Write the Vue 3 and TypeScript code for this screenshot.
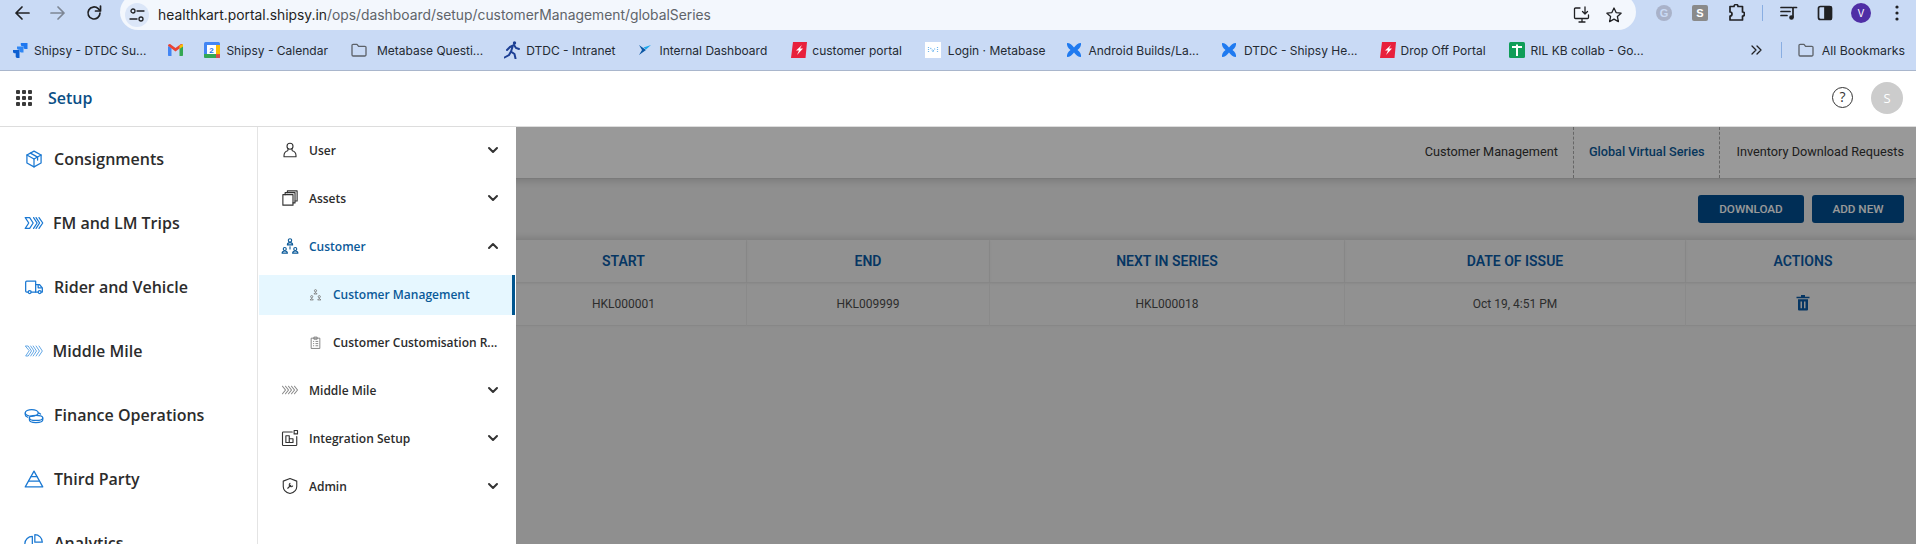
<script setup lang="ts">
interface NavItem { label: string; paths: string[]; faint?: boolean }
interface SubItem { label: string; paths: string[]; kind: 'group' | 'sub'; active?: boolean; open?: boolean; blue?: boolean; muted?: boolean }

const primary: NavItem[] = [
  { label: 'Consignments', paths: ['M12 2.5l8.5 4.7v9.6L12 21.5l-8.5-4.7V7.2z', 'M3.5 7.2L12 12l8.5-4.8', 'M12 12v9.5', 'M7.7 4.9l8.6 4.8v3.6'] },
  { label: 'FM and LM Trips', paths: ['M1.5 5.5h5.3l4.2 6.5-4.2 6.5H1.5L5.7 12z', 'M11.5 5.5L15.7 12l-4.2 6.5', 'M14.5 5.5L18.7 12l-4.2 6.5', 'M18 5.5l4.5 6.5-4.5 6.5'] },
  { label: 'Rider and Vehicle', paths: ['M5 18H3.2A1.2 1.2 0 0 1 2 16.800V6.200A1.200 1.200 0 0 1 3.200 5H14v13H8.500', 'M14 9h4.500l3.500 4v5h-1.500', 'M14 18h3', 'M5 18a1.800 1.800 0 1 0 3.600 0a1.800 1.800 0 1 0-3.600 0', 'M17 18a1.800 1.800 0 1 0 3.600 0a1.800 1.800 0 1 0-3.600 0', 'M17 10v3h4'] },
  { label: 'Middle Mile', faint: true, paths: ['M2 6h3l4 6-4 6H2l4-6z', 'M8 6l4 6-4 6', 'M11 6l4 6-4 6', 'M14.500 6l4 6-4 6', 'M18 6l4 6-4 6'] },
  { label: 'Finance Operations', paths: ['M1.500 9.500C1.500 7.300 5 5.500 9.300 5.500s7.800 1.800 7.800 4-3.500 4-7.800 4-7.800-1.800-7.800-4z', 'M1.500 9.500v2.300c0 1.200 1.200 2.200 3 2.900', 'M6.500 15.500c0-1.800 3.500-3 7.800-3s8.200 1.200 8.200 3-3.900 3-8.200 3-7.800-1.200-7.800-3z', 'M6.500 15.500v2.500c0 1.800 3.500 3 7.800 3s8.200-1.200 8.200-3v-2.500', 'M17 9.500c1 .3 2 .7 2.800 1.300'] },
  { label: 'Third Party', paths: ['M12 2.500L22.500 21.500h-21z', 'M8.500 9h7', 'M5.500 14.500h13'] },
  { label: 'Analytics', paths: ['M10 4a9 9 0 1 0 9 10h-9z', 'M13 2a9 9 0 0 1 9 9h-9z'] },
]

const secondary: SubItem[] = [
  { label: 'User', kind: 'group', paths: ['M8 7a4 4 0 1 0 8 0a4 4 0 1 0-8 0', 'M9.500 10.500l-.5 2.500C6 13.800 4 16.500 4 19.500V21h16v-1.500c0-3-2-5.700-5-6.500l-.5-2.500'] },
  { label: 'Assets', kind: 'group', paths: ['M2.500 7.500h13.500v14H2.500z', 'M5.500 7.500V4.800h13.200v13.700H16', 'M8.500 4.800V2.500h13v13.500h-2.800'] },
  { label: 'Customer', kind: 'group', open: true, blue: true, paths: ['M9.800 4.500a2.200 2.200 0 1 0 4.400 0a2.200 2.200 0 1 0-4.400 0', 'M8.500 10.500c0-2 1.500-3 3.500-3s3.500 1 3.500 3z', 'M3 16a2 2 0 1 0 4 0a2 2 0 1 0-4 0', 'M1.500 21.500c0-2 1.500-2.800 3.500-2.800s3.500.8 3.500 2.800z', 'M17 16a2 2 0 1 0 4 0a2 2 0 1 0-4 0', 'M15.500 21.500c0-2 1.500-2.800 3.500-2.800s3.500.8 3.500 2.800z', 'M12 13v3'] },
  { label: 'Customer Management', kind: 'sub', active: true, paths: ['M10 5a2 2 0 1 0 4 0a2 2 0 1 0-4 0', 'M9 11l3-3 3 3z', 'M3 16a2 2 0 1 0 4 0a2 2 0 1 0-4 0', 'M2 22l3-3 3 3z', 'M17 16a2 2 0 1 0 4 0a2 2 0 1 0-4 0', 'M16 22l3-3 3 3z'] },
  { label: 'Customer Customisation R...', kind: 'sub', paths: ['M4 4h16v19H4z', 'M9 2h6v4H9z', 'M7.500 10h2M12 10h5M7.500 14h2M12 14h5M7.500 18h2M12 18h5'] },
  { label: 'Middle Mile', kind: 'group', muted: true, paths: ['M2 7l4 5-4 5', 'M6 7l4 5-4 5', 'M10 7l4 5-4 5', 'M14 7l4 5-4 5', 'M18 7l4 5-4 5'] },
  { label: 'Integration Setup', kind: 'group', paths: ['M15 4H3a1 1 0 0 0-1 1v16a1 1 0 0 0 1 1h17a1 1 0 0 0 1-1V10', 'M6.500 9h4.500v9H6.500zM11 13h5v5h-5z', 'M17.500 2h4.500v4.500h-4.500z'] },
  { label: 'Admin', kind: 'group', paths: ['M12 2l9 3.500v7c0 4.500-3.500 8-9 9.500-5.500-1.500-9-5-9-9.500v-7z', 'M9 15l4-4', 'M12 8.500a2.500 2.500 0 1 0 3.500 3.500'] },
]

const columns = ['', 'START', 'END', 'NEXT IN SERIES', 'DATE OF ISSUE', 'ACTIONS']
const cells = ['', 'HKL000001', 'HKL009999', 'HKL000018', 'Oct 19, 4:51 PM']
const gridDots = [0, 1, 2].flatMap((r) => [0, 1, 2].map((c) => ({ x: 2 + c * 6, y: 2 + r * 6 })))
</script>

<template>
  <div class="screen">
    <header class="browser">
      <div class="toolbar">
        <div class="nav-buttons">
          <span class="tool"><svg width="18" height="18" viewBox="0 0 18 18" class="ink"><path d="M16 9H3M9 3L3 9l6 6" /></svg></span>
          <span class="tool"><svg width="18" height="18" viewBox="0 0 18 18" class="ink dim"><path d="M2 9h13M9 3l6 6-6 6" /></svg></span>
          <span class="tool"><svg width="18" height="18" viewBox="0 0 18 18" class="ink"><path d="M15 9a6 6 0 1 1-1.800-4.300L15 6.500" /><path d="M15.500 2v5h-5" /></svg></span>
        </div>
        <div class="omnibox">
          <span class="chip">
            <svg width="16" height="16" viewBox="0 0 16 16" class="ink thin"><circle cx="4" cy="4" r="2" /><path d="M8 4h7M1 12h7" /><circle cx="12" cy="12" r="2" /></svg>
          </span>
          <span class="url">healthkart.portal.shipsy.in<span class="url-path">/ops/dashboard/setup/customerManagement/globalSeries</span></span>
          <span class="omni-tool"><svg width="18" height="18" viewBox="0 0 18 18" class="ink thin"><path d="M7 2H2.500A1 1 0 0 0 1.500 3v8.500a1 1 0 0 0 1 1h12a1 1 0 0 0 1-1V9M6 16h6M9 13v3" /><path d="M12 1v7M9.500 5.500L12 8l2.500-2.500" /></svg></span>
          <span class="omni-tool"><svg width="18" height="18" viewBox="0 0 18 18" class="ink thin"><path d="M9 2l2.100 4.600 5 .6-3.700 3.400 1 5L9 13.100l-4.400 2.500 1-5L1.900 7.200l5-.6z" /></svg></span>
        </div>
        <div class="extensions">
          <span class="tool"><span class="ext-g">G</span></span>
          <span class="tool"><span class="ext-s">S</span></span>
          <span class="tool"><svg width="18" height="18" viewBox="0 0 18 18" class="ink"><path d="M3 2.500h4a2 2 0 0 1 4 0h4.500V8a2 2 0 0 1 0 4v4H3v-4a2 2 0 0 0 0-4z" /></svg></span>
          <span class="divider"></span>
          <span class="tool"><svg width="18" height="18" viewBox="0 0 18 18" class="ink"><path d="M1 3.500h11M1 7.500h9M1 11.500h6M13 13V3.500h3.500" /><circle cx="11.500" cy="13.500" r="1.500" fill="#202124" /></svg></span>
          <span class="tool"><svg width="18" height="18" viewBox="0 0 18 18" class="ink"><rect x="2.500" y="2.500" width="13" height="13" rx="2" /><rect x="9" y="3" width="6" height="12" fill="#202124" /></svg></span>
          <span class="tool"><span class="profile">V</span></span>
          <span class="tool"><svg width="4" height="16" viewBox="0 0 4 16"><circle cx="2" cy="2" r="1.600" fill="#202124" /><circle cx="2" cy="8" r="1.600" fill="#202124" /><circle cx="2" cy="14" r="1.600" fill="#202124" /></svg></span>
        </div>
      </div>
      <div class="bookmarks">
        <span class="mark"><svg width="16" height="16" viewBox="0 0 16 16"><path d="M15.500 1H8.800v1.800c0 .8.600 1.400 1.400 1.400h1.300v1.300c0 .8.600 1.400 1.400 1.400h2.600z" fill="#1f78f0" /><path d="M11.500 4.500H5v1.800c0 .8.600 1.400 1.400 1.400h1.300V9c0 .8.600 1.400 1.400 1.400h2.400z" fill="#2f86f4" /><path d="M7.500 8H1v1.800c0 .8.600 1.400 1.400 1.400h1.300v3.300c0 .8.600 1.400 1.400 1.400h2.400z" fill="#0d5fd1" /></svg><span>Shipsy - DTDC Su...</span></span>
        <span class="mark solo"><svg width="15" height="12" viewBox="0 0 15 12"><path d="M0 2v9c0 .6.400 1 1 1h2.500V4z" fill="#4285f4" /><path d="M11.500 4v8H14c.6 0 1-.4 1-1V2z" fill="#34a853" /><path d="M0 1.800C0 .4 1.500-.4 2.700.4L7.500 4l4.800-3.600C13.500-.4 15 .4 15 1.800L7.500 7.500z" fill="#ea4335" /><path d="M11.500 1.500L15 0v2.500l-3.500 2.500z" fill="#fbbc04" /></svg></span>
        <span class="mark"><svg width="16" height="16" viewBox="0 0 16 16"><rect width="16" height="16" rx="1.500" fill="#4285f4" /><rect x="12" y="3" width="4" height="10" fill="#fbbc04" /><path d="M0 12h12v4H1.500A1.500 1.500 0 0 1 0 14.500z" fill="#34a853" /><path d="M12 12h4v4h-4z" fill="#ea4335" opacity=".85" /><rect x="3" y="3" width="9" height="9" fill="#fff" /><text x="7.500" y="10.500" class="cal">2</text></svg><span>Shipsy - Calendar</span></span>
        <span class="mark"><svg width="16" height="14" viewBox="0 0 16 14" class="folder"><path d="M1 2.500A1.200 1.200 0 0 1 2.200 1.300H6l1.600 2h6.200A1.200 1.200 0 0 1 15 4.500v7.300a1.200 1.200 0 0 1-1.200 1.200H2.200A1.200 1.200 0 0 1 1 11.800z" /></svg><span>Metabase Questi...</span></span>
        <span class="mark"><svg width="16" height="18" viewBox="0 0 16 18"><circle cx="10.500" cy="2" r="1.700" fill="#1c3f94" /><path d="M6 6l4-2 2 3 3 1M8.500 6L7 10.500l3.500 2.500 1 4.500M7 10.500L5 14l-4.500 2.500M6 6L3 9" fill="none" stroke="#1c3f94" stroke-width="2" stroke-linecap="round" /></svg><span>DTDC - Intranet</span></span>
        <span class="mark"><svg width="12" height="12" viewBox="0 0 12 12"><path d="M0 1l7 5-7 5 3-5z" fill="#0b57a4" /><path d="M12 1L7 5.500 4.500 3.500z" fill="#1aa7ec" /></svg><span>Internal Dashboard</span></span>
        <span class="mark"><svg width="16" height="16" viewBox="0 0 16 16"><path d="M2 0h14l-1.500 16H0z" fill="#e8203c" /><path d="M11 3L5 8.500h3L6 13l6-6.500H9z" fill="#fff" /></svg><span>customer portal</span></span>
        <span class="mark"><svg width="16" height="16" viewBox="0 0 16 16"><rect width="16" height="16" fill="#fff" /><path d="M3.500 5v6M12.500 5v6M5.500 6l2.500 3 2.500-3M8 9v2" fill="none" stroke="#6fb6ee" stroke-width="1.200" stroke-dasharray="1 1" /></svg><span>Login · Metabase</span></span>
        <span class="mark"><svg width="16" height="16" viewBox="0 0 16 16"><path d="M1 1c3 0 5 2 7 4.500C10 3 12 1 15 1c.5 2.500-1 5-3.500 7 2.500 2 4 4.500 3.500 7-3 0-5-2-7-4.500C6 13 4 15 1 15c-.5-2.500 1-5 3.500-7C2 6 .5 3.500 1 1z" fill="#1f7af0" /></svg><span>Android Builds/La...</span></span>
        <span class="mark"><svg width="16" height="16" viewBox="0 0 16 16"><path d="M1 1c3 0 5 2 7 4.500C10 3 12 1 15 1c.5 2.500-1 5-3.500 7 2.500 2 4 4.500 3.500 7-3 0-5-2-7-4.500C6 13 4 15 1 15c-.5-2.500 1-5 3.500-7C2 6 .5 3.500 1 1z" fill="#1f7af0" /></svg><span>DTDC - Shipsy He...</span></span>
        <span class="mark"><svg width="16" height="16" viewBox="0 0 16 16"><path d="M2 0h14l-1.500 16H0z" fill="#e8203c" /><path d="M11 3L5 8.500h3L6 13l6-6.500H9z" fill="#fff" /></svg><span>Drop Off Portal</span></span>
        <span class="mark"><svg width="16" height="16" viewBox="0 0 16 16"><rect width="16" height="16" rx="1.500" fill="#0f9d58" /><path d="M3 5h10M8 2.500V14" stroke="#fff" stroke-width="2" /></svg><span>RIL KB collab - Go...</span></span>
        <span class="bookmarks-end">
          <svg width="11" height="10" viewBox="0 0 11 10" class="ink thin"><path d="M1 1l4 4-4 4M6 1l4 4-4 4" /></svg>
          <span class="bar-divider"></span>
          <span class="mark all"><svg width="16" height="14" viewBox="0 0 16 14" class="folder"><path d="M1 2.500A1.200 1.200 0 0 1 2.200 1.300H6l1.600 2h6.200A1.200 1.200 0 0 1 15 4.500v7.300a1.200 1.200 0 0 1-1.200 1.200H2.200A1.200 1.200 0 0 1 1 11.800z" /></svg><span>All Bookmarks</span></span>
        </span>
      </div>
    </header>

    <div class="app-bar">
      <svg class="app-grid" width="16" height="16" viewBox="0 0 16 16"><rect v-for="(d, i) in gridDots" :key="i" :x="d.x - 2" :y="d.y - 2" width="4" height="4" rx="1" fill="#3a3a3a" /></svg>
      <span class="app-title">Setup</span>
      <span class="app-actions">
        <span class="help">?</span>
        <span class="user">S</span>
      </span>
    </div>

    <main class="workspace">
      <section class="page">
        <nav class="tabs">
          <a class="tab">Customer Management</a>
          <a class="tab current">Global Virtual Series</a>
          <a class="tab">Inventory Download Requests</a>
        </nav>
        <div class="actions">
          <button class="btn">DOWNLOAD</button>
          <button class="btn add">ADD NEW</button>
        </div>
        <div class="table">
          <div v-for="(c, i) in columns" :key="'h' + i" class="th" :class="{ last: i === 5 }">{{ c }}</div>
          <div v-for="(c, i) in cells" :key="'c' + i" class="td">{{ c }}</div>
          <div class="td last">
            <svg class="trash" width="14" height="17" viewBox="0 0 14 16" preserveAspectRatio="none"><path d="M5 1h4v1.500h4.500V4H.5V2.500H5z" fill="#0a5ba6" /><path d="M2 5h10v9.500a1 1 0 0 1-1 1H3a1 1 0 0 1-1-1zM4.500 7v6.500H6V7zM8 7v6.500h1.500V7z" fill="#0a5ba6" fill-rule="evenodd" /></svg>
          </div>
        </div>
      </section>

      <div class="scrim"></div>

      <aside class="menu">
        <ul class="primary">
          <li v-for="item in primary" :key="item.label" class="primary-row">
            <svg class="nav-icon" :class="{ faint: item.faint }" width="20" height="20" viewBox="0 0 24 24"><path v-for="(d, i) in item.paths" :key="i" :d="d" /></svg>
            <span>{{ item.label }}</span>
          </li>
        </ul>
        <ul class="secondary">
          <li v-for="item in secondary" :key="item.label" :class="item.kind === 'group' ? 'group-row' : 'sub-row'">
            <template v-if="item.kind === 'group'">
              <svg class="group-icon" :class="{ blue: item.blue, muted: item.muted }" width="18" height="18" viewBox="0 0 24 24"><path v-for="(d, i) in item.paths" :key="i" :d="d" /></svg>
              <span class="group-label" :class="{ blue: item.blue }">{{ item.label }}</span>
              <svg class="chevron" width="12" height="8" viewBox="0 0 12 8"><path :d="item.open ? 'M2 6l4-4 4 4' : 'M2 2l4 4 4-4'" /></svg>
            </template>
            <div v-else class="sub-inner" :class="{ active: item.active }">
              <svg class="sub-icon" width="13" height="13" viewBox="0 0 24 24"><path v-for="(d, i) in item.paths" :key="i" :d="d" /></svg>
              <span>{{ item.label }}</span>
            </div>
          </li>
        </ul>
      </aside>
    </main>
  </div>
</template>

<style>
html, body { margin: 0; padding: 0; background: #fff; overflow: hidden; }
</style>

<style scoped>
.screen { width: 1916px; height: 544px; overflow: hidden; display: flex; flex-direction: column; font-family: "Open Sans", "Noto Sans", sans-serif; }
ul { list-style: none; margin: 0; padding: 0; }

.browser { height: 71px; box-sizing: border-box; background: #c9daf5; border-bottom: 1px solid #a9b6cc; font-family: Inter, "Liberation Sans", sans-serif; color: #1f1f1f; flex: none; }
.toolbar { height: 30px; display: flex; align-items: flex-start; }
.nav-buttons { display: flex; padding-left: 4px; width: 116px; flex: none; }
.tool { width: 36px; height: 26px; display: flex; align-items: center; justify-content: center; flex: none; }
.ink { fill: none; stroke: #202124; stroke-width: 1.700; stroke-linecap: round; stroke-linejoin: round; }
.ink.dim { stroke: #7d8694; }
.ink.thin { stroke-width: 1.300; }
.omnibox { width: 1516px; height: 36px; margin-top: -6px; border-radius: 18px; background: #f3f7fd; display: flex; align-items: center; padding: 0 6px 0 5px; box-sizing: border-box; flex: none; }
.omnibox > .chip { width: 24px; height: 24px; margin: 6px 9px 0 0; border-radius: 50%; background: #dbe6f8; display: flex; align-items: center; justify-content: center; flex: none; }
.url { flex: 1; font-size: 13.850px; padding-top: 6px; color: #1f1f1f; white-space: nowrap; }
.url-path { color: #60646a; }
.omni-tool { width: 32px; height: 26px; margin-top: 6px; display: flex; align-items: center; justify-content: center; }
.extensions { display: flex; align-items: center; margin-left: 10px; height: 26px; }
.ext-g { width: 16px; height: 16px; border-radius: 50%; background: #a9b2c9; color: #c9daf5; font: 700 11px/16px "Liberation Sans", sans-serif; text-align: center; }
.ext-s { width: 16px; height: 16px; border-radius: 2px; background: #8a8a8a; color: #fff; font: 700 11px/16px "Liberation Sans", sans-serif; text-align: center; }
.divider { width: 1px; height: 16px; margin: 0 8px; background: #89aee2; flex: none; }
.profile { width: 20px; height: 20px; border-radius: 50%; background: #4f2ea5; color: #fff; font-size: 10px; line-height: 20px; text-align: center; }

.bookmarks { height: 40px; display: flex; align-items: center; padding-left: 12px; font-size: 12px; }
.mark { display: flex; align-items: center; gap: 6px; margin-right: 21px; white-space: nowrap; color: #242a33; }
.mark svg { flex: none; }
.mark.solo { margin: 0 21px 0 1px; }
.bookmarks > .mark:nth-child(3) { margin-right: 23px; }
.bookmarks > .mark:nth-child(4) { gap: 10px; }
.bookmarks > .mark:nth-child(5) { margin-right: 24px; }
.bookmarks > .mark:nth-child(6) { gap: 8px; margin-right: 24px; }
.bookmarks > .mark:nth-child(7) { gap: 5px; margin-right: 23px; }
.bookmarks > .mark:nth-child(8) { gap: 7px; margin-right: 20px; }
.bookmarks > .mark:nth-child(9) { gap: 7px; margin-right: 22px; }
.bookmarks > .mark:nth-child(10) { gap: 7px; margin-right: 22px; }
.bookmarks > .mark:nth-child(11) { gap: 5px; margin-right: 23px; }
.folder { fill: none; stroke: #5c6168; stroke-width: 1.300; stroke-linejoin: round; }
.cal { font: 700 8px "Liberation Sans", sans-serif; fill: #1a73e8; text-anchor: middle; }
.bookmarks-end { margin-left: auto; display: flex; align-items: center; }
.bookmarks-end .mark { margin-right: 11px; }
.mark.all { gap: 8px; font-size: 12.300px; }
.bar-divider { width: 1px; height: 16px; margin: 0 16px 0 19px; background: #89aee2; }

.app-bar { height: 56px; box-sizing: border-box; border-bottom: 1px solid #ddd; display: flex; align-items: center; padding: 0 13px 2px 16px; background: #fff; flex: none; }
.app-title { margin-left: 16px; font-size: 16px; font-weight: 600; color: #0b4f86; }
.app-actions { margin-left: auto; display: flex; align-items: center; gap: 18px; }
.help { width: 21px; height: 21px; box-sizing: border-box; border: 1.500px solid #333; border-radius: 50%; font: 400 14px/18px "Open Sans", sans-serif; text-align: center; color: #333; }
.user { width: 32px; height: 32px; border-radius: 50%; background: #ccc; color: #fff; font-size: 13px; line-height: 32px; text-align: center; }

.workspace { position: relative; flex: 1; overflow: hidden; font-family: Roboto, "Liberation Sans", sans-serif; }
.page { height: 100%; background: #eee; display: flex; flex-direction: column; }
.tabs { height: 52px; box-sizing: border-box; background: #fff; border-bottom: 1px solid #ccc; box-shadow: 0 3px 6px rgba(0, 0, 0, .12); display: flex; justify-content: flex-end; align-items: stretch; padding-right: 12px; flex: none; position: relative; }
.tab { display: flex; align-items: center; padding: 0 15px 2px; font-size: 12.700px; color: #333; }
.tab:last-child { padding: 0 0 2px 17px; }
.tab.current { color: #0b5a99; font-weight: 500; padding-right: 14px; border-left: 1px dashed #aaa; border-right: 1px dashed #aaa; }
.actions { height: 61px; display: flex; justify-content: flex-end; align-items: flex-start; gap: 8px; padding: 16px 12px 0 0; box-sizing: border-box; flex: none; }
.btn { height: 28px; width: 106px; border: 0; border-radius: 3px; background: #004d8f; color: #fff; font: 500 11.700px Roboto, sans-serif; padding: 0; }
.btn.add { width: 92px; }
.table { display: grid; grid-template-columns: 501px 246px 243px 355px 341px 1fr; grid-auto-rows: 43px; background: #f2f2f2; box-shadow: 0 -3px 5px rgba(0, 0, 0, .1); flex: none; }
.th, .td { display: flex; align-items: center; justify-content: center; border-right: 1px solid #e6e6e6; border-bottom: 1px solid #e2e2e2; }
.th { height: 42px; font-size: 14px; font-weight: 600; color: #0a5ba6; box-shadow: 0 1px 2px rgba(0, 0, 0, .06); }
.td { font-size: 12px; color: #4c4c4c; }
.th.last, .td.last { border-right: 0; padding-left: 4px; }
.trash { margin-bottom: 3px; }

.scrim { position: absolute; inset: 0; background: rgba(0, 0, 0, .4); }

.menu { position: absolute; top: 0; left: 0; bottom: 0; width: 516px; display: flex; background: #fff; font-family: "Open Sans", "Noto Sans", sans-serif; }
.primary { width: 258px; box-sizing: border-box; border-right: 1px solid #e4e4e4; flex: none; }
.primary-row { height: 64px; display: flex; align-items: center; gap: 10px; padding-left: 24px; font-size: 16px; font-weight: 600; color: #2c2c2c; white-space: nowrap; }
.primary-row:nth-child(2) { gap: 9px; }
.primary-row:nth-child(4) { gap: 8.500px; }
.nav-icon { fill: none; stroke: #1a78d2; stroke-width: 1.500; stroke-linejoin: round; stroke-linecap: round; flex: none; }
.nav-icon.faint { stroke: #64a8e6; stroke-width: 1.200; }
.secondary { width: 258px; margin-top: -1px; flex: none; }
.group-row { height: 48px; display: flex; align-items: center; padding: 0 17px 0 23px; font-size: 12px; font-weight: 600; color: #2c2c2c; }
.group-icon { fill: none; stroke: #333; stroke-width: 1.500; stroke-linejoin: round; stroke-linecap: round; flex: none; }
.group-icon.blue { stroke: #0b5a99; }
.group-icon.muted { stroke: #8b8b8b; }
.group-label { margin-left: 10px; flex: 1; }
.group-label.blue { color: #0b5a99; }
.chevron { fill: none; stroke: #333; stroke-width: 2; stroke-linecap: round; stroke-linejoin: round; flex: none; }
.sub-row { height: 48px; padding: 5px 1px 3px; box-sizing: border-box; font-size: 12px; font-weight: 600; color: #2c2c2c; white-space: nowrap; }
.sub-inner { height: 40px; box-sizing: border-box; display: flex; align-items: center; gap: 11px; padding: 0 0 2px 50px; }
.sub-inner.active { background: #e6f7ff; border-right: 3px solid #00558f; color: #0b5a99; }
.sub-icon { fill: none; stroke: #777; stroke-width: 1.600; stroke-linejoin: round; flex: none; }
</style>
